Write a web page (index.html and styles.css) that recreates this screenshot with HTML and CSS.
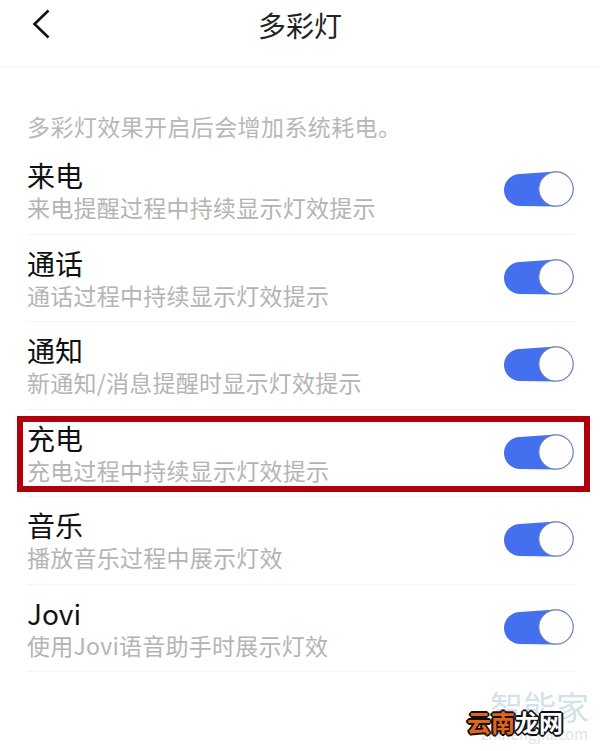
FILE: index.html
```html
<!DOCTYPE html>
<html lang="zh-CN">
<head>
    <meta charset="UTF-8">
    <meta name="viewport" content="width=device-width, initial-scale=1.0">
    <title>多彩灯</title>
    <link rel="stylesheet" href="styles.css">
</head>
<body>
    <svg class="defs" width="0" height="0">
        <symbol id="switch-on" viewBox="0 0 71 36">
            <path d="M17 3 L53 0.5 L53 35.5 L17 35 A16 16 0 0 1 17 3 Z" fill="#4470f0"/>
            <circle cx="53" cy="18" r="17.2" fill="#fff" stroke="#6a80b8" stroke-width="1.2"/>
        </symbol>
    </svg>

    <div class="page">
        <header class="topbar">
            <svg class="back" width="18" height="30" viewBox="0 0 18 30">
                <path d="M16.5 1.5 L2.5 15 L16.5 28.5" fill="none" stroke="#111" stroke-width="2.6"/>
            </svg>
            <div class="title">多彩灯</div>
        </header>

        <p class="notice">多彩灯效果开启后会增加系统耗电。</p>

        <div class="row">
            <div class="row-text">
                <div class="row-title">来电</div>
                <div class="row-desc">来电提醒过程中持续显示灯效提示</div>
            </div>
            <svg class="switch" width="71" height="36"><use href="#switch-on"/></svg>
        </div>
        <div class="row">
            <div class="row-text">
                <div class="row-title">通话</div>
                <div class="row-desc">通话过程中持续显示灯效提示</div>
            </div>
            <svg class="switch" width="71" height="36"><use href="#switch-on"/></svg>
        </div>
        <div class="row">
            <div class="row-text">
                <div class="row-title">通知</div>
                <div class="row-desc">新通知/消息提醒时显示灯效提示</div>
            </div>
            <svg class="switch" width="71" height="36"><use href="#switch-on"/></svg>
        </div>
        <div class="row">
            <div class="row-text">
                <div class="row-title">充电</div>
                <div class="row-desc">充电过程中持续显示灯效提示</div>
            </div>
            <svg class="switch" width="71" height="36"><use href="#switch-on"/></svg>
        </div>
        <div class="row">
            <div class="row-text">
                <div class="row-title">音乐</div>
                <div class="row-desc">播放音乐过程中展示灯效</div>
            </div>
            <svg class="switch" width="71" height="36"><use href="#switch-on"/></svg>
        </div>
        <div class="row">
            <div class="row-text">
                <div class="row-title">Jovi</div>
                <div class="row-desc">使用Jovi语音助手时展示灯效</div>
            </div>
            <svg class="switch" width="71" height="36"><use href="#switch-on"/></svg>
        </div>

        <div class="highlight"></div>

        <div class="mark">
            <div class="mark-back">智能家</div>
            <div class="mark-url">zhinengjia.com</div>
            <div class="mark-front"><span class="mark-orange">云南</span><span class="mark-white">龙网</span></div>
        </div>
    </div>
</body>
</html>
```

FILE: styles.css
```css
html, body {
    margin: 0;
    padding: 0;
}
body {
    background: #fff;
    font-family: "Noto Sans CJK SC", "Liberation Sans", sans-serif;
}
.defs {
    position: absolute;
}
.page {
    position: relative;
    width: 600px;
    height: 751px;
    overflow: hidden;
}
.topbar {
    height: 66px;
    border-bottom: 1px solid #f5f5f5;
    display: flex;
    align-items: center;
    justify-content: center;
    position: relative;
}
.back {
    position: absolute;
    left: 32px;
    top: 9px;
}
.title {
    font-size: 28px;
    color: #222;
    margin-top: -17px;
}
.notice {
    margin: 41px 0 3px 27px;
    font-size: 23px;
    line-height: 36px;
    height: 36px;
    color: #b8b8b8;
    letter-spacing: 0.4px;
}
.row {
    height: 86.5px;
    margin: 0 26px 0 27px;
    border-bottom: 1px solid #f3f3f3;
    display: flex;
    align-items: center;
    justify-content: space-between;
}
.row-title {
    font-size: 28px;
    line-height: 34px;
    color: #111;
}
.row-desc {
    font-size: 23px;
    line-height: 30px;
    color: #b4b4b4;
    letter-spacing: 0.25px;
}
.switch {
    flex: none;
    margin-top: -2px;
}
.highlight {
    position: absolute;
    left: 17px;
    top: 416px;
    width: 561px;
    height: 64px;
    border: 6px solid #b00009;
}
.mark {
    position: absolute;
    left: 466px;
    top: 686px;
    width: 134px;
    height: 65px;
}
.mark-back {
    position: absolute;
    left: 24px;
    top: -4px;
    font-size: 33px;
    color: #d3e2e8;
    white-space: nowrap;
}
.mark-url {
    position: absolute;
    right: 12px;
    top: 39px;
    font-size: 15px;
    line-height: 18px;
    color: #dde7ea;
    white-space: nowrap;
}
.mark-front {
    position: absolute;
    left: 1px;
    top: 21px;
    font-size: 24px;
    line-height: 30px;
    font-weight: 700;
    white-space: nowrap;
    text-shadow: 1px 1px 0 #111, -1px -1px 0 #111, 1px -1px 0 #111, -1px 1px 0 #111, 2px 0 0 #111, -2px 0 0 #111, 0 2px 0 #111, 0 -2px 0 #111;
}
.mark-orange {
    color: #e2641a;
}
.mark-white {
    color: #fff;
}
```
